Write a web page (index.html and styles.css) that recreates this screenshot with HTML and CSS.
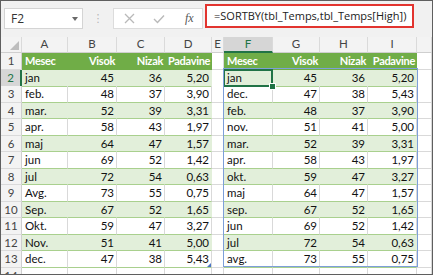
FILE: index.html
```html
<!DOCTYPE html>
<html lang="sr">
<head>
    <meta charset="UTF-8">
    <meta name="viewport" content="width=device-width, initial-scale=1.0">
    <title>SORTBY</title>
    <link rel="stylesheet" href="styles.css">
</head>
<body>
    <div class="window">
        <div class="formula-bar">
            <div class="name-box">F2<span class="caret"></span></div>
            <div class="grip">⋮</div>
            <div class="fn-box">
                <svg class="fn-icon" width="11" height="11" viewBox="0 0 11 11"><path d="M1 1 L10 10 M10 1 L1 10" stroke="#b9b9b9" stroke-width="1.3" fill="none"/></svg>
                <svg class="fn-icon" width="12" height="10" viewBox="0 0 12 10"><path d="M1 5 L4.5 8.5 L11 1.5" stroke="#b9b9b9" stroke-width="1.4" fill="none"/></svg>
                <span class="fx">fx</span>
            </div>
            <div class="formula-input">=SORTBY(tbl_Temps,tbl_Temps[High])</div>
        </div>

        <div class="sheet">
            <div class="row colhead">
                <div class="corner"></div>
                <div>A</div><div>B</div><div>C</div><div>D</div><div>E</div>
                <div class="sel-col">F</div><div>G</div><div>H</div><div>I</div><div></div>
            </div>

            <div class="row head">
                <div class="rh">1</div>
                <div class="c t">Mesec</div><div class="c">Visok</div><div class="c">Nizak</div><div class="c">Padavine</div>
                <div class="x"></div>
                <div class="c t">Mesec</div><div class="c">Visok</div><div class="c">Nizak</div><div class="c">Padavine</div>
                <div class="x"></div>
            </div>
            <div class="row band">
                <div class="rh sel-row">2</div>
                <div class="c t">jan</div><div class="c">45</div><div class="c">36</div><div class="c">5,20</div>
                <div class="x"></div>
                <div class="c t active">jan</div><div class="c">45</div><div class="c">36</div><div class="c">5,20</div>
                <div class="x"></div>
            </div>
            <div class="row">
                <div class="rh">3</div>
                <div class="c t">feb.</div><div class="c">48</div><div class="c">37</div><div class="c">3,90</div>
                <div class="x"></div>
                <div class="c t">dec.</div><div class="c">47</div><div class="c">38</div><div class="c">5,43</div>
                <div class="x"></div>
            </div>
            <div class="row band">
                <div class="rh">4</div>
                <div class="c t">mar.</div><div class="c">52</div><div class="c">39</div><div class="c">3,31</div>
                <div class="x"></div>
                <div class="c t">feb.</div><div class="c">48</div><div class="c">37</div><div class="c">3,90</div>
                <div class="x"></div>
            </div>
            <div class="row">
                <div class="rh">5</div>
                <div class="c t">apr.</div><div class="c">58</div><div class="c">43</div><div class="c">1,97</div>
                <div class="x"></div>
                <div class="c t">nov.</div><div class="c">51</div><div class="c">41</div><div class="c">5,00</div>
                <div class="x"></div>
            </div>
            <div class="row band">
                <div class="rh">6</div>
                <div class="c t">maj</div><div class="c">64</div><div class="c">47</div><div class="c">1,57</div>
                <div class="x"></div>
                <div class="c t">mar.</div><div class="c">52</div><div class="c">39</div><div class="c">3,31</div>
                <div class="x"></div>
            </div>
            <div class="row">
                <div class="rh">7</div>
                <div class="c t">jun</div><div class="c">69</div><div class="c">52</div><div class="c">1,42</div>
                <div class="x"></div>
                <div class="c t">apr.</div><div class="c">58</div><div class="c">43</div><div class="c">1,97</div>
                <div class="x"></div>
            </div>
            <div class="row band">
                <div class="rh">8</div>
                <div class="c t">jul</div><div class="c">72</div><div class="c">54</div><div class="c">0,63</div>
                <div class="x"></div>
                <div class="c t">okt.</div><div class="c">59</div><div class="c">47</div><div class="c">3,27</div>
                <div class="x"></div>
            </div>
            <div class="row">
                <div class="rh">9</div>
                <div class="c t">Avg.</div><div class="c">73</div><div class="c">55</div><div class="c">0,75</div>
                <div class="x"></div>
                <div class="c t">maj</div><div class="c">64</div><div class="c">47</div><div class="c">1,57</div>
                <div class="x"></div>
            </div>
            <div class="row band">
                <div class="rh">10</div>
                <div class="c t">Sep.</div><div class="c">67</div><div class="c">52</div><div class="c">1,65</div>
                <div class="x"></div>
                <div class="c t">sep.</div><div class="c">67</div><div class="c">52</div><div class="c">1,65</div>
                <div class="x"></div>
            </div>
            <div class="row">
                <div class="rh">11</div>
                <div class="c t">Okt.</div><div class="c">59</div><div class="c">47</div><div class="c">3,27</div>
                <div class="x"></div>
                <div class="c t">jun</div><div class="c">69</div><div class="c">52</div><div class="c">1,42</div>
                <div class="x"></div>
            </div>
            <div class="row band">
                <div class="rh">12</div>
                <div class="c t">Nov.</div><div class="c">51</div><div class="c">41</div><div class="c">5,00</div>
                <div class="x"></div>
                <div class="c t">jul</div><div class="c">72</div><div class="c">54</div><div class="c">0,63</div>
                <div class="x"></div>
            </div>
            <div class="row">
                <div class="rh">13</div>
                <div class="c t">dec.</div><div class="c">47</div><div class="c">38</div><div class="c table-end">5,43</div>
                <div class="x"></div>
                <div class="c t">avg.</div><div class="c">73</div><div class="c">55</div><div class="c">0,75</div>
                <div class="x"></div>
            </div>
            <div class="row empty">
                <div class="rh">14</div>
                <div class="x"></div><div class="x"></div><div class="x"></div><div class="x"></div>
                <div class="x"></div>
                <div class="x"></div><div class="x"></div><div class="x"></div><div class="x"></div>
                <div class="x"></div>
            </div>

            <!-- spill range F2:I13 -->
            <div class="spill"></div>
        </div>
    </div>
</body>
</html>
```

FILE: styles.css
```css
body {
    margin: 0;
    background: #fff;
}

.window {
    width: 433px;
    height: 275px;
    box-sizing: border-box;
    border: 1px solid #5f5f5f;
    overflow: hidden;
    background: #fff;
    font-family: "Lato", "Open Sans", sans-serif;
}

/* formula bar */
.formula-bar {
    display: flex;
    align-items: flex-start;
    height: 36px;
    padding-top: 3px;
    box-sizing: border-box;
    background: #f1f1f1;
}

.name-box {
    display: flex;
    align-items: center;
    justify-content: space-between;
    margin: 4px 0 0 3px;
    width: 79px;
    height: 21px;
    box-sizing: border-box;
    padding: 0 4px 0 6px;
    background: #fff;
    border: 1px solid #d4d4d4;
    font-family: "Open Sans", sans-serif;
    font-size: 12px;
    color: #333;
}

.caret {
    width: 0;
    height: 0;
    border-left: 3px solid transparent;
    border-right: 3px solid transparent;
    border-top: 4px solid #6a6a6a;
}

.grip {
    width: 30px;
    margin-top: 9px;
    text-align: center;
    font-family: "DejaVu Sans", sans-serif;
    font-size: 11px;
    line-height: 11px;
    color: #b5b5b5;
}

.fn-box {
    display: flex;
    align-items: center;
    margin-top: 4px;
    width: 90px;
    height: 21px;
    box-sizing: border-box;
    background: #fff;
    border: 1px solid #dcdcdc;
    padding-left: 10px;
    gap: 18px;
}

.fx {
    font-family: "Liberation Serif", serif;
    font-style: italic;
    font-size: 12px;
    color: #555;
    margin-left: 2px;
}

.formula-input {
    margin-left: 2px;
    width: 209px;
    height: 24px;
    box-sizing: border-box;
    border: 2px solid #e2342f;
    background: #fff;
    padding-left: 7px;
    font-family: "Open Sans", sans-serif;
    font-size: 11px;
    line-height: 20px;
    color: #222;
    white-space: nowrap;
}

/* grid */
.sheet {
    position: relative;
}

.row {
    display: grid;
    grid-template-columns: 21px 46px 49px 48px 47px 12px 49px 47px 48px 49px 1fr;
    height: 17px;
    font-size: 11.5px;
    color: #111;
}

.row:nth-child(odd) {
    height: 16px;
}

.row > div {
    box-sizing: border-box;
    border-right: 1px solid #d9d9d9;
    border-bottom: 1px solid #a9d08e;
    padding: 0 2px 0 3px;
    text-align: right;
    line-height: 16px;
    white-space: nowrap;
    overflow: hidden;
}

.row > .t {
    text-align: left;
}

.row > .x {
    border-bottom-color: #d9d9d9;
    background: #fff;
}

.colhead {
    height: 15px;
    background: #f3f3f3;
    color: #444;
}

.colhead > div {
    text-align: center;
    border-right-color: #dadada;
    border-bottom: 1px solid #cfcfcf;
    line-height: 14px;
    font-size: 11.5px;
    padding: 0;
}

.corner {
    position: relative;
}

.corner::after {
    content: "";
    position: absolute;
    right: 2px;
    bottom: 2px;
    border-left: 9px solid transparent;
    border-bottom: 9px solid #bdbdbd;
}

.colhead > .sel-col {
    background: #d6d6d6;
    color: #217346;
    border-bottom: 2px solid #217346;
}

.row > .rh {
    background: #f3f3f3;
    color: #444;
    text-align: center;
    padding: 0;
    font-size: 11.5px;
    border-right-color: #cfcfcf;
    border-bottom-color: #dadada;
}

.row > .sel-row {
    background: #d6d6d6;
    color: #217346;
    border-right: 2px solid #217346;
}

.head > .c {
    background: #70ad47;
    color: #fff;
    font-weight: bold;
    font-size: 11px;
    letter-spacing: -0.3px;
    padding-right: 1px;
    border-right-color: #70ad47;
    border-bottom-color: #70ad47;
}

.head > .t {
    padding-left: 3px;
}

.band > .c {
    background: #e2efda;
    border-right-color: #e2efda;
}

.active {
    position: relative;
    overflow: visible !important;
}

.active::before {
    content: "";
    position: absolute;
    left: -1px;
    top: -1px;
    right: -1px;
    bottom: -1px;
    border: 2px solid #217346;
}

.active::after {
    content: "";
    position: absolute;
    right: -4px;
    bottom: -4px;
    width: 5px;
    height: 5px;
    background: #217346;
    border: 1px solid #fff;
}

.table-end {
    position: relative;
}

.table-end::after {
    content: "";
    position: absolute;
    right: 0;
    bottom: 0;
    border-left: 4px solid transparent;
    border-bottom: 4px solid #4a74c4;
}

.spill {
    position: absolute;
    left: 222px;
    top: 31px;
    width: 195px;
    height: 199px;
    box-sizing: border-box;
    border: 1px solid #7d9fd9;
    pointer-events: none;
}
```
